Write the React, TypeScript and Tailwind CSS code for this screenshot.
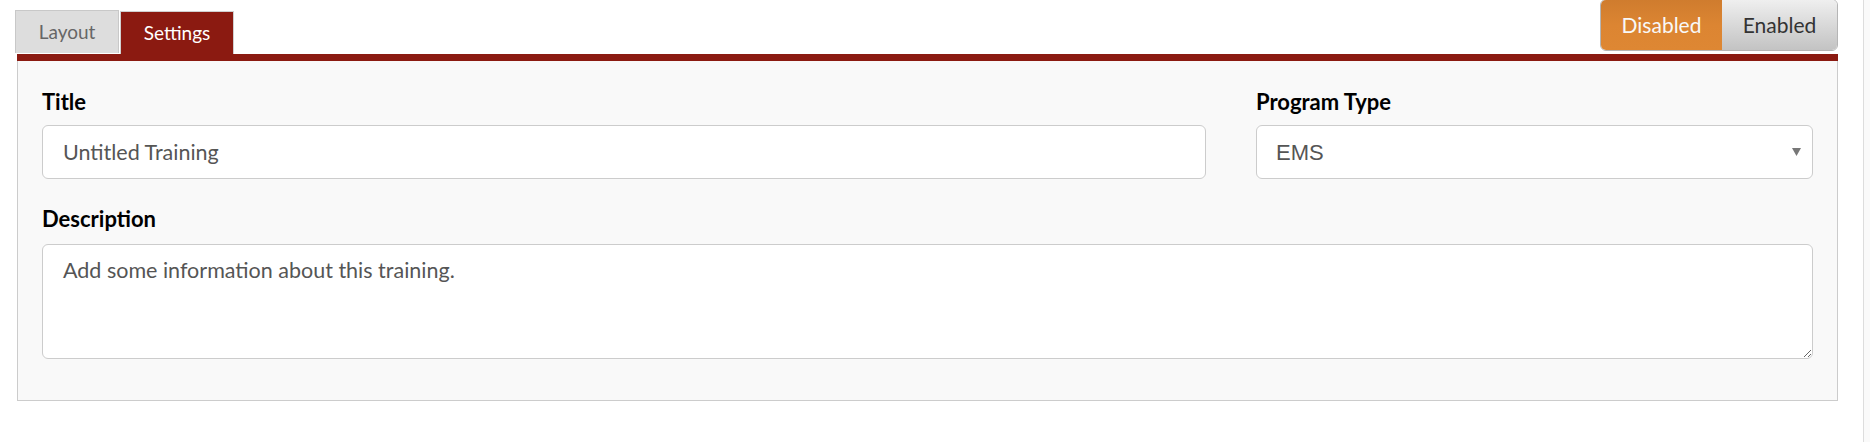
import React from "react";

const App: React.FC = () => {
  return (
    <div className="flex h-[442px] w-full bg-white font-['Lato',sans-serif]">
      <div className="flex-1 pl-[15px] pr-[25px]">
        <div className="flex h-[54px] items-start justify-between">
          <div className="flex h-full items-end gap-[1px]">
            <button className="mb-[1px] flex h-[43px] w-[104px] items-center justify-center border border-b-0 border-[#c8c8c8] bg-[#dddddd] text-[19px] text-[#666666]">
              Layout
            </button>
            <button className="flex h-[43px] w-[114px] items-center justify-center border border-b-0 border-[#d0d0d0] bg-[#8b1a11] text-[19px] text-white">
              Settings
            </button>
          </div>
          <div className="-mt-[1px] flex h-[52px] overflow-hidden rounded-[6px] border border-[#b5b5b5]">
            <button className="flex w-[121px] items-center justify-center bg-gradient-to-b from-[#cf7c2e] via-[#dc8532] to-[#de8733] text-[21px] text-[#f8f8f8]">
              Disabled
            </button>
            <button className="flex w-[115px] items-center justify-center bg-gradient-to-b from-[#efefef] to-[#c3c3c3] text-[21px] text-[#333333]">
              Enabled
            </button>
          </div>
        </div>
        <div className="ml-[2px] h-[7px] bg-[#8b1a11]" />
        <div className="ml-[2px] border border-t-0 border-[#cccccc] bg-[#f9f9f9] px-[24px] pt-[29px] pb-[41px]">
          <div className="grid grid-cols-[1fr_557px] gap-x-[50px]">
            <div>
              <label className="block text-[22px] leading-[24px] font-bold text-black">
                Title
              </label>
              <div className="mt-[11px] flex h-[54px] items-center rounded-[6px] border border-[#cccccc] bg-white px-[20px] text-[21.5px] text-[#555555]">
                Untitled Training
              </div>
            </div>
            <div>
              <label className="block text-[22px] leading-[24px] font-bold text-black">
                Program Type
              </label>
              <div className="mt-[11px] flex h-[54px] items-center justify-between rounded-[6px] border border-[#cccccc] bg-white pr-[11px] pl-[19px] font-['Liberation_Sans',sans-serif] text-[22px] text-[#555555]">
                <span>EMS</span>
                <svg width="9" height="8" viewBox="0 0 9 8">
                  <path d="M0 0 H9 L4.5 8 Z" fill="#777777" />
                </svg>
              </div>
            </div>
          </div>
          <label className="mt-[28px] block text-[22px] leading-[24px] font-bold text-black">
            Description
          </label>
          <textarea
            className="mt-[13px] block h-[115px] w-full resize-y rounded-[6px] border border-[#cccccc] bg-white px-[20px] pt-[13px] text-[21.5px] leading-[24px] text-[#555555] outline-none"
            defaultValue="Add some information about this training."
          />
        </div>
      </div>
      <div className="w-[7px] border-l border-[#dddddd] bg-[#fafafa]" />
    </div>
  );
};

export default App;
